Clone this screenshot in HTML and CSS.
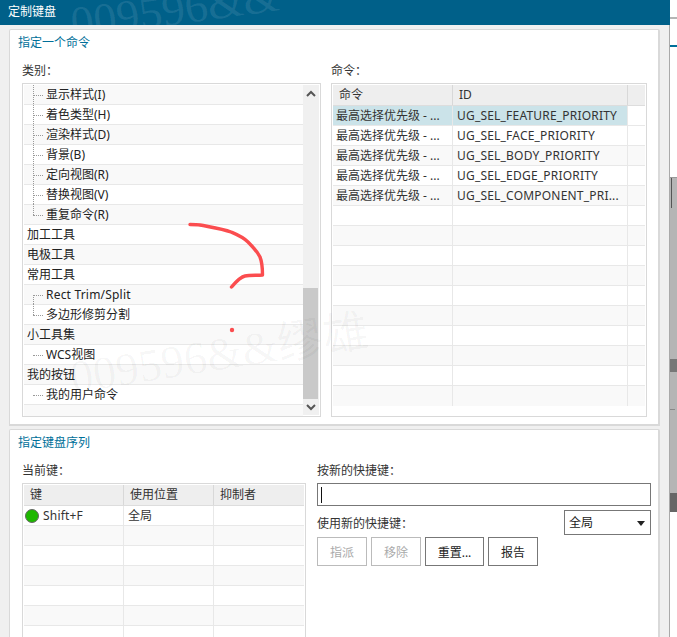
FILE: index.html
```html
<!DOCTYPE html>
<html lang="zh-CN">
<head>
    <meta charset="UTF-8">
    <title>定制键盘</title>
    <link rel="stylesheet" href="styles.css">
</head>
<body>
    <div class="screen">
        <div class="dialog">
            <div class="titlebar">定制键盘<div class="watermark wm-top">009596&amp;&amp;</div></div>
            <div class="dialog-body">
                <section class="panel panel-command">
                    <div class="panel-title">指定一个命令</div>
                    <div class="command-cols">
                        <div class="col-tree">
                            <div class="field-label">类别：</div>
                            <div class="listbox tree-box">
                                <div class="tree-rows">
                                    <div class="tree-row child">显示样式(I)</div>
                                    <div class="tree-row child">着色类型(H)</div>
                                    <div class="tree-row child">渲染样式(D)</div>
                                    <div class="tree-row child">背景(B)</div>
                                    <div class="tree-row child">定向视图(R)</div>
                                    <div class="tree-row child">替换视图(V)</div>
                                    <div class="tree-row child last">重复命令(R)</div>
                                    <div class="tree-row">加工工具</div>
                                    <div class="tree-row">电极工具</div>
                                    <div class="tree-row">常用工具</div>
                                    <div class="tree-row child first latin">Rect Trim/Split</div>
                                    <div class="tree-row child last">多边形修剪分割</div>
                                    <div class="tree-row">小工具集</div>
                                    <div class="tree-row child only">WCS视图</div>
                                    <div class="tree-row">我的按钮</div>
                                    <div class="tree-row child only">我的用户命令</div>
                                    <div class="tree-row end"></div>
                                </div>
                                <div class="scrollbar">
                                    <svg class="arrow" width="16" height="19" viewBox="0 0 16 19"><path d="M4 11 L8 7 L12 11" fill="none" stroke="#555" stroke-width="2"/></svg>
                                    <div class="scroll-track"><div class="scroll-thumb"></div></div>
                                    <svg class="arrow" width="16" height="17" viewBox="0 0 16 17"><path d="M4 6 L8 10 L12 6" fill="none" stroke="#555" stroke-width="2"/></svg>
                                </div>
                            </div>
                        </div>
                        <div class="col-table">
                            <div class="field-label">命令：</div>
                            <div class="listbox">
                                <div class="grid-row grid-head cmd-grid">
                                    <div class="cell head">命令</div>
                                    <div class="cell head">ID</div>
                                    <div class="cell"></div>
                                </div>
                                <div class="grid-row cmd-grid selected">
                                    <div class="cell">最高选择优先级 - ...</div>
                                    <div class="cell latin">UG_SEL_FEATURE_PRIORITY</div>
                                    <div class="cell blank"></div>
                                </div>
                                <div class="grid-row cmd-grid">
                                    <div class="cell">最高选择优先级 - ...</div>
                                    <div class="cell latin">UG_SEL_FACE_PRIORITY</div>
                                    <div class="cell"></div>
                                </div>
                                <div class="grid-row cmd-grid alt">
                                    <div class="cell">最高选择优先级 - ...</div>
                                    <div class="cell latin">UG_SEL_BODY_PRIORITY</div>
                                    <div class="cell"></div>
                                </div>
                                <div class="grid-row cmd-grid">
                                    <div class="cell">最高选择优先级 - ...</div>
                                    <div class="cell latin">UG_SEL_EDGE_PRIORITY</div>
                                    <div class="cell"></div>
                                </div>
                                <div class="grid-row cmd-grid alt">
                                    <div class="cell">最高选择优先级 - ...</div>
                                    <div class="cell latin">UG_SEL_COMPONENT_PRI...</div>
                                    <div class="cell"></div>
                                </div>
                                <div class="grid-row cmd-grid"><div class="cell"></div><div class="cell"></div><div class="cell"></div></div>
                                <div class="grid-row cmd-grid alt"><div class="cell"></div><div class="cell"></div><div class="cell"></div></div>
                                <div class="grid-row cmd-grid"><div class="cell"></div><div class="cell"></div><div class="cell"></div></div>
                                <div class="grid-row cmd-grid alt"><div class="cell"></div><div class="cell"></div><div class="cell"></div></div>
                                <div class="grid-row cmd-grid"><div class="cell"></div><div class="cell"></div><div class="cell"></div></div>
                                <div class="grid-row cmd-grid alt"><div class="cell"></div><div class="cell"></div><div class="cell"></div></div>
                                <div class="grid-row cmd-grid"><div class="cell"></div><div class="cell"></div><div class="cell"></div></div>
                                <div class="grid-row cmd-grid alt"><div class="cell"></div><div class="cell"></div><div class="cell"></div></div>
                                <div class="grid-row cmd-grid"><div class="cell"></div><div class="cell"></div><div class="cell"></div></div>
                                <div class="grid-row cmd-grid alt end"><div class="cell"></div><div class="cell"></div><div class="cell"></div></div>
                            </div>
                        </div>
                    </div>
                </section>

                <section class="panel panel-keys">
                    <div class="panel-title">指定键盘序列</div>
                    <div class="key-cols">
                        <div class="col-keys">
                            <div class="field-label">当前键：</div>
                            <div class="listbox key-box">
                                <div class="grid-row grid-head key-grid">
                                    <div class="cell head">键</div>
                                    <div class="cell head">使用位置</div>
                                    <div class="cell head">抑制者</div>
                                </div>
                                <div class="grid-row key-grid">
                                    <div class="cell key-cell latin"><span class="status-dot"></span>Shift+F</div>
                                    <div class="cell">全局</div>
                                    <div class="cell"></div>
                                </div>
                                <div class="grid-row key-grid alt"><div class="cell"></div><div class="cell"></div><div class="cell"></div></div>
                                <div class="grid-row key-grid"><div class="cell"></div><div class="cell"></div><div class="cell"></div></div>
                                <div class="grid-row key-grid alt"><div class="cell"></div><div class="cell"></div><div class="cell"></div></div>
                                <div class="grid-row key-grid"><div class="cell"></div><div class="cell"></div><div class="cell"></div></div>
                                <div class="grid-row key-grid alt"><div class="cell"></div><div class="cell"></div><div class="cell"></div></div>
                                <div class="grid-row key-grid"><div class="cell"></div><div class="cell"></div><div class="cell"></div></div>
                            </div>
                        </div>
                        <div class="col-new">
                            <div class="field-label">按新的快捷键：</div>
                            <div class="key-input"><span class="caret"></span></div>
                            <div class="use-row">
                                <span class="use-label">使用新的快捷键：</span>
                                <div class="select-box">全局<span class="select-arrow"></span></div>
                            </div>
                            <div class="button-row">
                                <button class="btn" disabled>指派</button>
                                <button class="btn" disabled>移除</button>
                                <button class="btn btn-wide">重置...</button>
                                <button class="btn">报告</button>
                            </div>
                        </div>
                    </div>
                </section>
            </div>
        </div>

        <!-- what shows behind the dialog on the right -->
        <div class="behind">
            <div class="behind-top">
                <div class="behind-line"></div>
                <div class="behind-accent"></div>
            </div>
            <div class="behind-gray">
                <div class="behind-mark"></div>
                <div class="behind-rule"></div>
            </div>
            <div class="behind-dark"></div>
        </div>

        <div class="watermark wm-bottom">009596&amp;&amp;缪雄</div>

        <svg class="pen" width="677" height="637" viewBox="0 0 677 637">
            <path d="M190 224.5 C194 224.5 197 224.5 200 225 C210 227 222 228.5 231 232 C238 235 243 237 248 242 C253 247 257 251 260 257 C262 262 262.5 268 262.5 275 C257 275.5 250 275 245 276 C240 277 235 283 231.5 287" fill="none" stroke="#fb4d4f" stroke-width="3.4" stroke-linecap="round" stroke-linejoin="round"/>
            <circle cx="232" cy="330" r="2.2" fill="#fb4d4f"/>
        </svg>
    </div>
</body>
</html>
```

FILE: styles.css
```css
* {
    box-sizing: border-box;
}
html, body {
    margin: 0;
    padding: 0;
}
body {
    font-family: "Noto Sans", "Noto Sans CJK SC", sans-serif;
    font-size: 12px;
    color: #222;
    background: #fff;
}
.screen {
    position: relative;
    display: flex;
    width: 677px;
    height: 637px;
    overflow: hidden;
}
.dialog {
    display: flex;
    flex-direction: column;
    width: 670px;
    height: 637px;
    background: #f0f0f0;
    border-right: 1px solid #aaa;
}
.titlebar {
    position: relative;
    flex: none;
    height: 25px;
    margin-right: -1px;
    padding-left: 8px;
    line-height: 24px;
    color: #fff;
    background: #006089;
    overflow: hidden;
}
.dialog-body {
    flex: 1;
    display: flex;
    flex-direction: column;
    gap: 3px;
    padding: 4px 9px 0 9px;
}
.panel {
    background: #fff;
    border: 1px solid #d9d9d9;
    border-width: 1px 2px 2px 1px;
    border-radius: 2px 2px 0 0;
}
.panel-command {
    flex: none;
    height: 397px;
}
.panel-keys {
    flex: 1;
    border-bottom: none;
}
.panel-title {
    height: 24px;
    padding-left: 8px;
    line-height: 25px;
    color: #006f99;
}
.field-label {
    height: 21px;
    line-height: 17px;
    color: #333;
}
.command-cols {
    display: flex;
    gap: 10px;
    padding: 8px 12px 0 12px;
}
.col-tree {
    width: 299px;
}
.col-table {
    width: 316px;
}
.listbox {
    height: 334px;
    padding: 1px;
    background: #fff;
    border: 1px solid #d9d9d9;
    overflow: hidden;
}
.tree-box {
    display: flex;
}
.tree-rows {
    width: 279px;
}
.tree-row {
    position: relative;
    height: 20px;
    padding-left: 3px;
    line-height: 19px;
    color: #222;
    white-space: nowrap;
    background: #fff;
    border-bottom: 1px solid #e8e8e8;
}
.tree-row:nth-child(odd) {
    background: #f9f9f9;
}
.tree-row.end {
    height: 11px;
    border-bottom: none;
}
.tree-row.child {
    padding-left: 22px;
}
/* dotted tree connectors */
.tree-row.child::before {
    content: "";
    position: absolute;
    left: 9px;
    top: -2px;
    bottom: -2px;
    border-left: 1px dotted #999;
}
.tree-row.child::after {
    content: "";
    position: absolute;
    left: 9px;
    top: 10px;
    width: 10px;
    border-top: 1px dotted #999;
}
.tree-row.child.first::before {
    top: 10px;
}
.tree-row.child.last::before {
    bottom: 9px;
}
.tree-row.child.only::before {
    display: none;
}
.latin {
    letter-spacing: 0.2px;
}
.scrollbar {
    display: flex;
    flex-direction: column;
    width: 16px;
    background: #f0f0f0;
}
.arrow {
    flex: none;
    display: block;
}
.scroll-track {
    flex: 1;
    padding-top: 184px;
}
.scroll-thumb {
    width: 15px;
    height: 111px;
    background: #c9c9c9;
}
.grid-row {
    display: grid;
    height: 20px;
    border-bottom: 1px solid #e8e8e8;
}
.cmd-grid {
    grid-template-columns: 120px 175px 18px;
}
.key-grid {
    grid-template-columns: 100px 90px 91px;
}
.grid-head {
    height: 21px;
    background: #eee;
    border-bottom: 1px solid #ddd;
}
.grid-row.alt {
    background: #f9f9f9;
}
.grid-row.selected .cell {
    background: #cbe3e9;
}
.grid-row.selected .cell.blank {
    background: #fff;
}
.cmd-grid.end {
    border-bottom: none;
}
.cell {
    padding-left: 3px;
    line-height: 19px;
    color: #333;
    white-space: nowrap;
    overflow: hidden;
    border-right: 1px solid #e8e8e8;
}
.cell:nth-child(2) {
    padding-left: 4px;
}
.cell:last-child {
    border-right: none;
}
.grid-head .cell {
    line-height: 20px;
    border-right-color: #d8d8d8;
}
.grid-head .cell.head {
    padding-left: 6px;
}
.key-cols {
    display: flex;
    gap: 11px;
    padding: 8px 7px 0 12px;
}
.col-keys {
    width: 284px;
}
.key-box {
    height: 160px;
    border-bottom: none;
}
.cell.key-cell {
    display: flex;
    align-items: center;
    padding-left: 1px;
    gap: 4px;
}
.status-dot {
    flex: none;
    width: 14px;
    height: 14px;
    background: #1eb800;
    border: 1px solid #666;
    border-radius: 50%;
}
.col-new {
    flex: 1;
}
.key-input {
    height: 23px;
    padding: 3px;
    background: #fff;
    border: 1px solid #777;
}
.caret {
    display: block;
    width: 1px;
    height: 16px;
    background: #111;
}
.use-row {
    display: flex;
    justify-content: space-between;
    align-items: center;
    height: 25px;
    margin-top: 4px;
}
.use-label {
    color: #333;
    padding-top: 1px;
}
.select-box {
    position: relative;
    width: 87px;
    height: 25px;
    padding-left: 4px;
    line-height: 23px;
    color: #222;
    background: #fff;
    border: 1px solid #777;
}
.select-arrow {
    position: absolute;
    right: 5px;
    top: 10px;
    border-top: 5px solid #222;
    border-left: 4px solid transparent;
    border-right: 4px solid transparent;
}
.button-row {
    display: flex;
    gap: 4px;
    margin-top: 2px;
}
.btn {
    width: 50px;
    height: 29px;
    padding: 0;
    font: inherit;
    color: #222;
    background: #fff;
    border: 1px solid #777;
}
.btn:disabled {
    color: #aaa;
    border-color: #bbb;
}
.btn-wide {
    width: 59px;
}
.behind {
    display: flex;
    flex-direction: column;
    flex: 1;
    height: 637px;
}
.behind-top {
    height: 177px;
    padding-top: 17px;
}
.behind-line {
    height: 2px;
    background: #b5b5b5;
}
.behind-accent {
    height: 2px;
    margin-top: 26px;
    background: #006f99;
}
.behind-gray {
    position: relative;
    height: 316px;
    padding-top: 181px;
    background: #b5b5b5;
    border-top: 1px solid #999;
}
.behind-gray::before {
    content: "";
    position: absolute;
    left: 1px;
    top: 0;
    width: 1px;
    height: 30px;
    background: #555;
}
.behind-mark {
    height: 13px;
    background: #777;
}
.behind-rule {
    width: 5px;
    height: 1px;
    margin-top: 37px;
    background: #888;
}
.behind-dark {
    height: 19px;
    background: #666;
}
.watermark {
    position: absolute;
    font-family: "Liberation Serif", "Noto Sans CJK SC", serif;
    font-size: 46px;
    line-height: 46px;
    white-space: nowrap;
    pointer-events: none;
    transform-origin: 0 100%;
}
.wm-top {
    left: 74px;
    top: 1px;
    color: rgba(255, 255, 255, 0.1);
    transform: rotate(-8deg);
}
.wm-bottom {
    left: 74px;
    top: 355px;
    color: rgba(0, 0, 0, 0.035);
    transform: rotate(-9deg);
}
.pen {
    position: absolute;
    left: 0;
    top: 0;
    pointer-events: none;
}
```
